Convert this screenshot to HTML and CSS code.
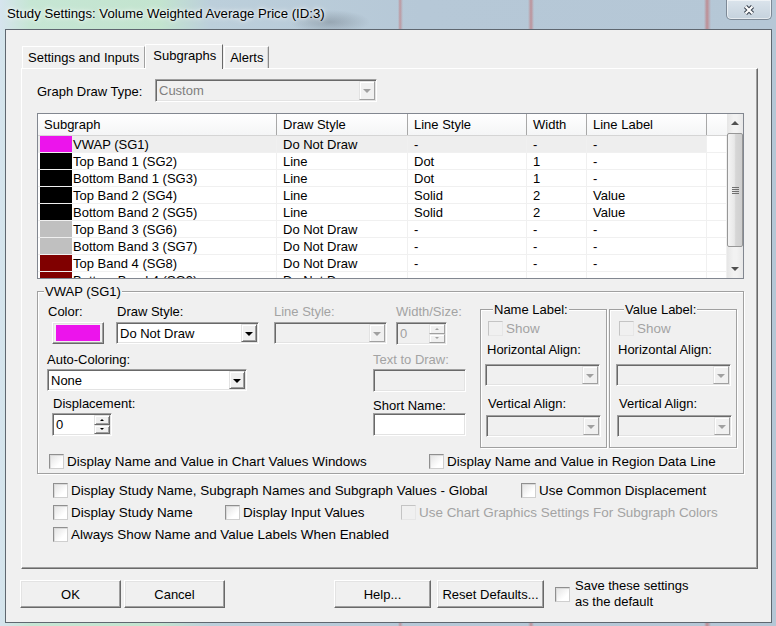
FILE: index.html
```html
<!DOCTYPE html>
<html lang="en">
<head>
	<meta charset="UTF-8">
	<title>Study Settings</title>
	<link rel="stylesheet" href="styles.css">
</head>
<body>
	<header class="titlebar">
		<h1>Study Settings: Volume Weighted Average Price (ID:3)</h1>
		<button class="close-btn"><svg width="14" height="12" viewBox="0 0 14 12"><path d="M3.5 2.5 L10.5 9.5 M10.5 2.5 L3.5 9.5" stroke="#3d4652" stroke-width="4.4"/><path d="M3.5 2.5 L10.5 9.5 M10.5 2.5 L3.5 9.5" stroke="#fff" stroke-width="2.2"/></svg></button>
	</header>
	<main class="window">
		<nav class="tabs">
			<span class="tab tab-settings">Settings and Inputs</span>
			<span class="tab active">Subgraphs</span>
			<span class="tab tab-alerts">Alerts</span>
		</nav>
		<section class="panel">
			<div class="draw-type">
				<label>Graph Draw Type:</label>
				<div class="combo disabled"><span class="val">Custom</span><span class="drop"></span></div>
			</div>
			<div class="listview">
				<div class="lv-grid">
					<div class="lv-row lv-head"><span>Subgraph</span><span>Draw Style</span><span>Line Style</span><span>Width</span><span>Line Label</span><span class="fill"></span></div>
					<div class="lv-row sel"><span class="c-name"><i class="sw sw-magenta"></i>VWAP (SG1)</span><span>Do Not Draw</span><span>-</span><span>-</span><span>-</span><span class="fill"></span></div>
					<div class="lv-row"><span class="c-name"><i class="sw sw-black"></i>Top Band 1 (SG2)</span><span>Line</span><span>Dot</span><span>1</span><span>-</span><span class="fill"></span></div>
					<div class="lv-row"><span class="c-name"><i class="sw sw-black"></i>Bottom Band 1 (SG3)</span><span>Line</span><span>Dot</span><span>1</span><span>-</span><span class="fill"></span></div>
					<div class="lv-row"><span class="c-name"><i class="sw sw-black"></i>Top Band 2 (SG4)</span><span>Line</span><span>Solid</span><span>2</span><span>Value</span><span class="fill"></span></div>
					<div class="lv-row"><span class="c-name"><i class="sw sw-black"></i>Bottom Band 2 (SG5)</span><span>Line</span><span>Solid</span><span>2</span><span>Value</span><span class="fill"></span></div>
					<div class="lv-row"><span class="c-name"><i class="sw sw-silver"></i>Top Band 3 (SG6)</span><span>Do Not Draw</span><span>-</span><span>-</span><span>-</span><span class="fill"></span></div>
					<div class="lv-row"><span class="c-name"><i class="sw sw-silver"></i>Bottom Band 3 (SG7)</span><span>Do Not Draw</span><span>-</span><span>-</span><span>-</span><span class="fill"></span></div>
					<div class="lv-row"><span class="c-name"><i class="sw sw-maroon"></i>Top Band 4 (SG8)</span><span>Do Not Draw</span><span>-</span><span>-</span><span>-</span><span class="fill"></span></div>
					<div class="lv-row"><span class="c-name"><i class="sw sw-maroon"></i>Bottom Band 4 (SG9)</span><span>Do Not Draw</span><span>-</span><span>-</span><span>-</span><span class="fill"></span></div>
				</div>
				<div class="vscroll">
					<span class="sb-btn up"></span>
					<span class="thumb"><i></i></span>
					<span class="track"></span>
					<span class="sb-btn down"></span>
				</div>
			</div>
			<fieldset class="group">
				<legend>VWAP (SG1)</legend>
				<div class="group-body">
					<div class="fields">
						<div class="field-row first">
							<div class="field f-color"><label>Color:</label><button class="color-btn"><span></span></button></div>
							<div class="field f-draw"><label>Draw Style:</label><div class="combo"><span class="val">Do Not Draw</span><span class="drop"></span></div></div>
							<div class="field f-line off"><label>Line Style:</label><div class="combo disabled"><span class="val"></span><span class="drop"></span></div></div>
							<div class="field f-width off"><label>Width/Size:</label><div class="spin disabled"><span class="val">0</span><span class="arrows"><i class="up"></i><i class="down"></i></span></div></div>
						</div>
						<div class="field-row second">
							<div class="field f-auto"><label>Auto-Coloring:</label><div class="combo"><span class="val">None</span><span class="drop"></span></div></div>
							<div class="field f-text off"><label>Text to Draw:</label><div class="edit disabled"></div></div>
						</div>
						<div class="field-row third">
							<div class="field f-disp"><label>Displacement:</label><div class="spin"><span class="val">0</span><span class="arrows"><i class="up"></i><i class="down"></i></span></div></div>
							<div class="field f-short"><label>Short Name:</label><div class="edit"></div></div>
						</div>
					</div>
					<div class="label-groups">
						<fieldset class="sub-group">
							<legend>Name Label:</legend>
							<span class="cb disabled show">Show</span>
							<label>Horizontal Align:</label>
							<div class="combo disabled"><span class="val"></span><span class="drop"></span></div>
							<label class="v-align">Vertical Align:</label>
							<div class="combo disabled low"><span class="val"></span><span class="drop"></span></div>
						</fieldset>
						<fieldset class="sub-group">
							<legend>Value Label:</legend>
							<span class="cb disabled show">Show</span>
							<label>Horizontal Align:</label>
							<div class="combo disabled"><span class="val"></span><span class="drop"></span></div>
							<label class="v-align">Vertical Align:</label>
							<div class="combo disabled low"><span class="val"></span><span class="drop"></span></div>
						</fieldset>
					</div>
				</div>
				<div class="check-row">
					<span class="cb w-380">Display Name and Value in Chart Values Windows</span>
					<span class="cb">Display Name and Value in Region Data Line</span>
				</div>
			</fieldset>
			<div class="checks">
				<div class="check-line">
					<span class="cb w-468">Display Study Name, Subgraph Names and Subgraph Values - Global</span>
					<span class="cb">Use Common Displacement</span>
				</div>
				<div class="check-line">
					<span class="cb w-172">Display Study Name</span>
					<span class="cb w-176">Display Input Values</span>
					<span class="cb disabled">Use Chart Graphics Settings For Subgraph Colors</span>
				</div>
				<div class="check-line">
					<span class="cb">Always Show Name and Value Labels When Enabled</span>
				</div>
			</div>
		</section>
		<footer class="buttons">
			<button class="btn w-101">OK</button>
			<button class="btn w-101">Cancel</button>
			<button class="btn help">Help...</button>
			<button class="btn reset">Reset Defaults...</button>
			<span class="cb save-default">Save these settings<br>as the default</span>
		</footer>
	</main>
</body>
</html>
```

FILE: styles.css
```css
* {margin:0;padding:0;box-sizing:border-box;}
body {width:776px;height:626px;overflow:hidden;font:13px "Liberation Sans",Arial,sans-serif;color:#000;
	background:
		radial-gradient(ellipse 40px 12px at 330px 22px,rgba(90,100,110,.35),transparent),
		linear-gradient(90deg,transparent 398px,rgba(196,92,92,.45) 400px,transparent 403px),
		linear-gradient(90deg,transparent 528px,rgba(196,92,92,.5) 531px,transparent 534px),
		linear-gradient(90deg,transparent 704px,rgba(196,92,92,.55) 707px,transparent 711px),
		linear-gradient(90deg,#d6e4ee 0,#c6e6d4 30px,#c3e4cf 160px,#bccfdb 210px,#b6c8d7 420px,#b5c7d6 776px);}

/* title bar */
.titlebar {height:29px;display:flex;align-items:flex-start;}
.titlebar h1 {font-size:13.2px;font-weight:normal;line-height:28px;padding-left:7px;text-shadow:0 0 6px #fff,0 0 3px #fff;}
.close-btn {margin-left:auto;margin-right:4px;width:46px;height:20px;border:1px solid #7d8996;border-top:none;border-radius:0 0 5px 5px;
	background:linear-gradient(#dbe4ec,#c5d2dd);box-shadow:inset 0 0 0 1px rgba(255,255,255,.55);display:flex;align-items:center;justify-content:center;}

/* dialog client area */
.window {margin-left:5px;width:767px;height:594px;border:1px solid #5f6770;background:#f0f0f0;padding:14px 13px 0 15px;}

.tabs {display:flex;align-items:flex-end;height:24px;padding-left:1px;position:relative;z-index:1;}
.tab {height:22px;line-height:21px;padding:0 5px;border:1px solid;border-bottom:none;border-color:#fff #a0a0a0 transparent #fff;background:#f0f0f0;white-space:nowrap;}
.tab-alerts {margin-left:1px;box-shadow:inset -1px 0 #d4d4d4;border-right-color:#8a8a8a;}
.tab.active {height:25px;line-height:22px;padding:0 6px 0 7px;margin-bottom:-1px;border-right-color:#696969;}

.panel {height:501px;border:1px solid;border-color:#fff #696969 #696969 #fff;box-shadow:inset -1px -1px #a0a0a0;padding:0 13px 0 15px;}

.draw-type {display:flex;align-items:center;margin-top:10px;}
.draw-type label {width:118px;padding-top:1px;}
.draw-type .combo {width:222px;height:23px;}

/* generic controls */
.combo {display:flex;height:22px;background:#fff;border:1px solid;border-color:#a0a0a0 #fff #fff #a0a0a0;box-shadow:inset 1px 1px #696969,inset -1px -1px #e3e3e3;padding:1px;}
.combo .val {flex:1;padding:1px 0 0 2px;line-height:18px;white-space:nowrap;overflow:hidden;}
.combo .drop {width:16px;border:1px solid;border-color:#e3e3e3 #696969 #696969 #e3e3e3;box-shadow:inset 1px 1px #fff,inset -1px -1px #a0a0a0;background:#f0f0f0;display:flex;align-items:center;justify-content:center;}
.combo .drop::after {content:"";border-top:4px solid #000;border-left:4px solid transparent;border-right:4px solid transparent;margin-top:1px;}
.combo.disabled {background:#f0f0f0;}
.combo.disabled .val {color:#7f7f7f;}
.combo.disabled .drop {border-color:#e3e3e3 #a0a0a0 #a0a0a0 #e3e3e3;box-shadow:inset 1px 1px #fff;}
.combo.disabled .drop::after {border-top-color:#a0a0a0;}

.edit {height:23px;background:#fff;border:1px solid;border-color:#a0a0a0 #fff #fff #a0a0a0;box-shadow:inset 1px 1px #696969,inset -1px -1px #e3e3e3;}
.edit.disabled {background:#f0f0f0;}

.spin {display:flex;height:23px;background:#fff;border:1px solid;border-color:#a0a0a0 #fff #fff #a0a0a0;box-shadow:inset 1px 1px #696969,inset -1px -1px #e3e3e3;padding:1px;}
.spin .val {flex:1;padding:1px 0 0 2px;line-height:18px;}
.spin .arrows {width:16px;display:flex;flex-direction:column;}
.spin .arrows i {flex:1;border:1px solid;border-color:#e3e3e3 #696969 #696969 #e3e3e3;box-shadow:inset 1px 1px #fff,inset -1px -1px #a0a0a0;background:#f0f0f0;display:flex;align-items:center;justify-content:center;}
.spin .arrows .up::after {content:"";border-bottom:2px solid #000;border-left:2px solid transparent;border-right:2px solid transparent;}
.spin .arrows .down::after {content:"";border-top:2px solid #000;border-left:2px solid transparent;border-right:2px solid transparent;}
.spin.disabled {background:#f0f0f0;}
.spin.disabled .val {color:#a0a0a0;}
.spin.disabled .arrows i {border-color:#e3e3e3 #a0a0a0 #a0a0a0 #e3e3e3;box-shadow:inset 1px 1px #fff;}
.spin.disabled .arrows i::after {border-top-color:#a0a0a0;border-bottom-color:#a0a0a0;}

.cb {display:flex;align-items:center;gap:3px;font-size:13.45px;line-height:15px;white-space:nowrap;}
.cb::before {content:"";flex:none;width:13px;height:13px;border:1px solid;border-color:#8f8f8f #cfcfcf #cfcfcf #8f8f8f;background:linear-gradient(135deg,#e2e2e2,#fff 70%);box-shadow:inset 1px 1px #dadada;}
.cb.disabled {color:#a3a3a3;}
.cb.disabled::before {background:#f0f0f0;border-color:#c4c4c4 #e6e6e6 #e6e6e6 #c4c4c4;box-shadow:none;}
.w-380 {width:380px;}
.w-468 {width:468px;}
.w-172 {width:172px;}
.w-176 {width:176px;}

/* list view */
.listview {margin-top:11px;height:166px;display:flex;border:1px solid #828790;background:#fff;}
.lv-grid {flex:1;overflow:hidden;}
.lv-row {display:grid;grid-template-columns:239px 131px 119px 60px 120px 20px;height:17px;}
.lv-row > span {border-right:1px solid #f0f0f0;border-bottom:1px solid #f0f0f0;padding:2px 0 0 6px;line-height:14px;white-space:nowrap;overflow:hidden;}
.lv-head {height:22px;background:linear-gradient(#fff,#f4f5f6);border-bottom:1px solid #d5d5d5;}
.lv-head > span {padding-top:1px;line-height:20px;border-bottom:none;border-right:1px solid #a8a8a8;}
.lv-head > .fill {border-right:none;}
.sel > span:not(.fill) {background:#eeeeee;}
.lv-row > .c-name {display:flex;align-items:flex-start;padding:0 0 0 2px;line-height:18px;}
.sw {width:32px;height:16px;margin-right:1px;flex:none;}
.sw-magenta {background:#ec14ec;}
.sw-black {background:#000;}
.sw-silver {background:#c0c0c0;}
.sw-maroon {background:#800000;}

.vscroll {width:16px;display:flex;flex-direction:column;background:linear-gradient(90deg,#e6e6e6,#f2f2f2 40%,#f2f2f2 60%,#e8e8e8);}
.sb-btn {height:18px;display:flex;align-items:center;justify-content:center;}
.sb-btn.up::after {content:"";border-bottom:4px solid #505050;border-left:4px solid transparent;border-right:4px solid transparent;}
.sb-btn.down::after {content:"";border-top:4px solid #505050;border-left:4px solid transparent;border-right:4px solid transparent;}
.thumb {height:114px;margin:1px 0 0;border:1px solid #979797;border-radius:2px;background:linear-gradient(90deg,#f4f4f4,#e8e8e8 45%,#d6d6d6 55%,#cfcfcf);display:flex;align-items:center;justify-content:center;}
.thumb i {width:7px;height:7px;background:repeating-linear-gradient(#6f6f6f 0 1px,transparent 1px 2px);}
.track {flex:1;}

/* group boxes */
fieldset {border:1px solid #a0a0a0;box-shadow:inset 1px 1px #fff,1px 1px #fff;min-width:0;}
legend {background:#f0f0f0;padding:0 1px;line-height:15px;}
.group {margin-top:5px;padding:0 0 4px;}
.group > legend {margin-left:6px;}
.group-body {display:flex;padding:5px 5px 0 9px;}

.fields {width:419px;}
.field-row {display:flex;}
.field label {display:block;line-height:15px;white-space:nowrap;}
.field.off label {color:#a3a3a3;}
.field-row.first {padding-left:1px;}
.field-row.first .combo,.field-row.first .spin,.field-row.first .color-btn {margin-top:3px;}
.f-color {width:68px;}
.color-btn {display:block;margin-left:4px;width:52px;height:22px;padding:2px 3px;border:1px solid;border-color:#fff #696969 #696969 #fff;box-shadow:inset -1px -1px #a0a0a0,inset 1px 1px #e3e3e3;background:#f0f0f0;}
.color-btn span {display:block;height:16px;background:#ec14ec;}
.f-draw {width:143px;}
.f-draw label {padding-left:1px;}
.f-line {width:113px;margin-left:15px;}
.f-width {width:51px;margin-left:9px;}

.field-row.second {justify-content:space-between;margin-top:7px;}
.field-row.second .combo,.field-row.second .edit {margin-top:2px;}
.f-auto {width:200px;}
.f-text,.f-short {width:93px;}
.field-row.third {justify-content:space-between;margin-top:4px;}
.field-row.third .spin,.field-row.third .edit {margin-top:2px;}
.f-short label {padding-top:2px;margin-bottom:-2px;}
.f-disp {width:60px;margin-left:5px;}
.f-disp label {padding-left:1px;}

.label-groups {display:flex;gap:2px;margin-left:14px;margin-top:-1px;}
.sub-group {width:127px;padding:0 0 10px 4px;}
.sub-group + .sub-group {width:128px;padding-left:6px;}
.sub-group legend {margin-left:8px;line-height:13px;}
.sub-group .show {margin:5px 0 0 3px;}
.sub-group label {display:block;line-height:15px;margin:6px 0 0 2px;}
.sub-group .combo {width:115px;margin-top:7px;}
.sub-group label.v-align {margin-top:10px;margin-left:3px;}
.sub-group .combo.low {margin-top:4px;margin-left:1px;}

.check-row {display:flex;margin:6px 0 0 11px;}

.checks {display:flex;flex-direction:column;gap:7px;margin-top:9px;padding-left:16px;}
.check-line {display:flex;}

/* dialog buttons */
.buttons {display:flex;align-items:center;height:28px;gap:3px;margin:11px 0 0 -1px;}
.btn {height:28px;font:13px "Liberation Sans",Arial,sans-serif;border:1px solid;border-color:#fff #696969 #696969 #fff;box-shadow:inset -1px -1px #a0a0a0,inset 1px 1px #e3e3e3;background:#f0f0f0;}
.w-101 {width:101px;}
.help {width:97px;margin-left:106px;}
.reset {width:107px;margin-left:3px;}
.save-default {margin-left:8px;line-height:16px;font-size:13px;gap:5px;}
```
